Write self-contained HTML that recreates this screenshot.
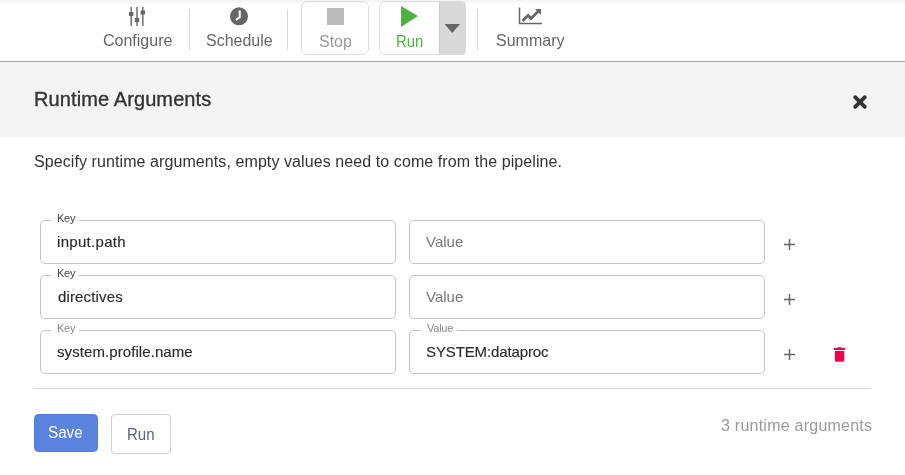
<!DOCTYPE html>
<html><head><meta charset="utf-8">
<style>
*{box-sizing:border-box;margin:0;padding:0}
html,body{width:905px;height:475px;overflow:hidden;background:#fff;font-family:"Liberation Sans",sans-serif}
.a{position:absolute}
.t{position:absolute;white-space:nowrap;line-height:1}
.topband{left:0;top:0;width:905px;height:4px;background:linear-gradient(#f3f3f3,#fff)}
.vdiv{width:1px;background:#d6d6d6;top:9px;height:41px}
.tbtxt{font-size:16px;color:#666;top:33px}
.hdr{left:0;top:62px;width:905px;height:75px;background:#f4f4f4}
.hline{left:0;top:61px;width:905px;height:1px;background:#a3a3a3;box-shadow:0 -1px 2px rgba(0,0,0,0.07)}
.field{border:1px solid #c4c4c4;border-radius:5px;height:44px;width:356px}
.lbl{font-size:11px;background:#fff;padding:0 4px 0 6px;letter-spacing:-0.25px;color:#444}
.val{font-size:15px;color:#2b2b2b;-webkit-text-stroke:0.15px #2b2b2b}
.ph{font-size:15px;color:#777}
.plus{width:12px;height:12px}
</style></head><body>
<div id="root" style="position:absolute;left:0;top:0;width:905px;height:475px;will-change:transform;background:#fff">
<div class="a topband"></div>

<!-- Toolbar -->
<svg class="a" style="left:127px;top:6px" width="20" height="21" viewBox="0 0 20 21">
  <g fill="#666">
    <rect x="3.5" y="1" width="1.4" height="19"/>
    <rect x="9.3" y="1" width="1.4" height="19"/>
    <rect x="15.1" y="1" width="1.4" height="19"/>
    <rect x="2" y="6" width="4.4" height="4"/>
    <rect x="7.8" y="12" width="4.4" height="4"/>
    <rect x="13.6" y="4.5" width="4.4" height="4"/>
  </g>
</svg>
<div class="t tbtxt" style="left:103px">Configure</div>
<div class="a vdiv" style="left:189px"></div>

<svg class="a" style="left:229px;top:6px" width="20" height="20" viewBox="0 0 20 20">
  <circle cx="10" cy="10.3" r="9" fill="#666"/>
  <path d="M10.7 4.4 V11.2 L6.9 14" stroke="#fff" stroke-width="2.1" fill="none" stroke-linejoin="miter"/>
</svg>
<div class="t tbtxt" style="left:206px">Schedule</div>
<div class="a vdiv" style="left:287px"></div>

<div class="a" style="left:301px;top:1px;width:68px;height:54px;border:1px solid #dcdcdc;border-radius:6px"></div>
<div class="a" style="left:327px;top:8px;width:17px;height:17px;background:#bbb"></div>
<div class="t tbtxt" style="left:319px;top:34px;color:#999">Stop</div>

<div class="a" style="left:379px;top:1px;width:87px;height:54px;border:1px solid #dcdcdc;border-radius:6px 4px 4px 6px;overflow:hidden">
  <div class="a" style="left:59px;top:0;width:29px;height:54px;background:#d9d9d9;border-left:1px solid #c8c8c8"></div>
</div>
<svg class="a" style="left:400px;top:5px" width="20" height="23" viewBox="0 0 20 23">
  <path d="M1 1 L18 11 L1 22 Z" fill="#4cb33d"/>
</svg>
<div class="t tbtxt" style="left:396px;top:34px;color:#4cb33d;transform:scaleX(0.93);transform-origin:0 0">Run</div>
<svg class="a" style="left:444px;top:23px" width="17" height="11" viewBox="0 0 17 11">
  <path d="M0.5 1 L16 1 L8.25 10 Z" fill="#666"/>
</svg>
<div class="a vdiv" style="left:477px"></div>

<svg class="a" style="left:517px;top:6px" width="27" height="20" viewBox="0 0 27 20">
  <path d="M2.5 1.5 V17.5 H25" stroke="#666" stroke-width="1.5" fill="none"/>
  <path d="M5.5 15 L11 9.5 L14 12.5 L21 5.5" stroke="#666" stroke-width="2.8" fill="none"/>
  <path d="M18 3 L24 3 L24 9 Z" fill="#666"/>
</svg>
<div class="t tbtxt" style="left:496px">Summary</div>

<!-- header -->
<div class="a hline"></div>
<div class="a hdr"></div>
<div class="t" style="left:34px;top:89px;font-size:20px;letter-spacing:0.1px;color:#333;-webkit-text-stroke:0.35px #333">Runtime Arguments</div>
<svg class="a" style="left:852px;top:94px" width="16" height="16" viewBox="0 0 16 16">
  <path d="M3.2 3.2 L12.8 12.8 M12.8 3.2 L3.2 12.8" stroke="#333" stroke-width="3.8" stroke-linecap="round"/>
</svg>

<div class="t" style="left:34px;top:154px;font-size:16px;letter-spacing:0.085px;color:#333">Specify runtime arguments, empty values need to come from the pipeline.</div>

<!-- rows -->
<div class="a field" style="left:40px;top:220px"></div>
<div class="t lbl" style="left:51px;top:213px">Key</div>
<div class="t val" style="left:57px;top:234px;letter-spacing:0.3px">input.path</div>
<div class="a field" style="left:409px;top:220px"></div>
<div class="t ph" style="left:426px;top:234px">Value</div>
<svg class="a" style="left:783px;top:238px" width="13" height="13" viewBox="0 0 13 13"><path d="M6.5 1 V12 M1 6.5 H12" stroke="#666" stroke-width="1.5"/></svg>

<div class="a field" style="left:40px;top:275px"></div>
<div class="t lbl" style="left:51px;top:268px">Key</div>
<div class="t val" style="left:58px;top:289px;letter-spacing:0.15px">directives</div>
<div class="a field" style="left:409px;top:275px"></div>
<div class="t ph" style="left:426px;top:289px">Value</div>
<svg class="a" style="left:783px;top:293px" width="13" height="13" viewBox="0 0 13 13"><path d="M6.5 1 V12 M1 6.5 H12" stroke="#666" stroke-width="1.5"/></svg>

<div class="a field" style="left:40px;top:330px"></div>
<div class="t lbl" style="left:51px;top:323px;color:#888">Key</div>
<div class="t val" style="left:57px;top:344px;letter-spacing:0.08px">system.profile.name</div>
<div class="a field" style="left:409px;top:330px"></div>
<div class="t lbl" style="left:421px;top:323px;color:#888">Value</div>
<div class="t val" style="left:426px;top:344px;letter-spacing:-0.12px">SYSTEM:dataproc</div>
<svg class="a" style="left:783px;top:348px" width="13" height="13" viewBox="0 0 13 13"><path d="M6.5 1 V12 M1 6.5 H12" stroke="#666" stroke-width="1.5"/></svg>
<svg class="a" style="left:825px;top:340px" width="30" height="30" viewBox="0 0 30 30">
  <path d="M8.8 8 H20.2 V10.1 H8.8 Z M12.2 7.8 Q12.4 7.2 13 7.2 H16 Q16.6 7.2 16.8 7.8 V8.2 H12.2 Z M9.8 11 H19.3 V20.2 Q19.3 21.8 17.7 21.8 H11.4 Q9.8 21.8 9.8 20.2 Z" fill="#f2004f"/>
</svg>

<div class="a" style="left:34px;top:388px;width:837px;height:1px;background:#d5d5d5"></div>

<div class="a" style="left:34px;top:414px;width:64px;height:38px;background:#5a83e0;border:1px solid #527bdc;border-radius:4.5px"></div>
<div class="t" style="left:48px;top:425px;font-size:16px;color:#fff;transform:scaleX(0.95);transform-origin:0 0">Save</div>
<div class="a" style="left:111px;top:414px;width:60px;height:40px;border:1px solid #cfcfcf;border-radius:4px"></div>
<div class="t" style="left:127px;top:427px;font-size:16px;color:#5c6475;transform:scaleX(0.94);transform-origin:0 0">Run</div>

<div class="t" style="left:721px;top:418px;font-size:16px;letter-spacing:0.24px;color:#9a9a9a">3 runtime arguments</div>
</div>
</body></html>
